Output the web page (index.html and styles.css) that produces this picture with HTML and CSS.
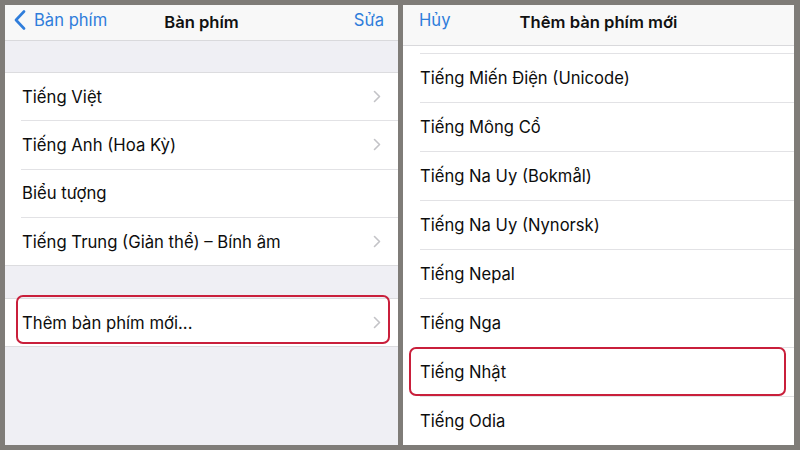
FILE: index.html
```html
<!DOCTYPE html>
<html lang="vi">
<head>
<meta charset="utf-8">
<link rel="stylesheet" href="styles.css">
</head>
<body>
<div class="frame">
  <section class="panel left">
    <header class="nav nav-left">
      <span class="back">
        <svg class="back-icon" width="12" height="20" viewBox="0 0 12 20"><polyline points="10,1.5 2,10 10,18.5" fill="none" stroke="#2f7ddb" stroke-width="2.6" stroke-linecap="round" stroke-linejoin="round"/></svg>
        <span>Bàn phím</span>
      </span>
      <span class="title">Bàn phím</span>
      <span class="action">Sửa</span>
    </header>
    <div class="spacer top"></div>
    <div class="group">
      <div class="row"><div class="row-inner"><span>Tiếng Việt</span><svg class="chev" width="8" height="13" viewBox="0 0 8 13"><polyline points="1.5,1.5 6.5,6.5 1.5,11.5" fill="none" stroke="#c3c3c7" stroke-width="1.6" stroke-linecap="round" stroke-linejoin="round"/></svg></div></div>
      <div class="row"><div class="row-inner"><span>Tiếng Anh (Hoa Kỳ)</span><svg class="chev" width="8" height="13" viewBox="0 0 8 13"><polyline points="1.5,1.5 6.5,6.5 1.5,11.5" fill="none" stroke="#c3c3c7" stroke-width="1.6" stroke-linecap="round" stroke-linejoin="round"/></svg></div></div>
      <div class="row"><div class="row-inner"><span>Biểu tượng</span></div></div>
      <div class="row last"><div class="row-inner"><span>Tiếng Trung (Giản thể) – Bính âm</span><svg class="chev" width="8" height="13" viewBox="0 0 8 13"><polyline points="1.5,1.5 6.5,6.5 1.5,11.5" fill="none" stroke="#c3c3c7" stroke-width="1.6" stroke-linecap="round" stroke-linejoin="round"/></svg></div></div>
    </div>
    <div class="spacer mid"></div>
    <div class="group">
      <div class="row last"><div class="row-inner"><span>Thêm bàn phím mới...</span><svg class="chev" width="8" height="13" viewBox="0 0 8 13"><polyline points="1.5,1.5 6.5,6.5 1.5,11.5" fill="none" stroke="#c3c3c7" stroke-width="1.6" stroke-linecap="round" stroke-linejoin="round"/></svg></div></div>
    </div>
    <div class="highlight hl-left"></div>
  </section>
  <section class="panel right">
    <header class="nav nav-right">
      <span class="action cancel">Hủy</span>
      <span class="title">Thêm bàn phím mới</span>
      <span class="action placeholder"></span>
    </header>
    <div class="list">
      <div class="item"><span>Tiếng Miến Điện (Unicode)</span></div>
      <div class="item"><span>Tiếng Mông Cổ</span></div>
      <div class="item"><span>Tiếng Na Uy (Bokmål)</span></div>
      <div class="item"><span>Tiếng Na Uy (Nynorsk)</span></div>
      <div class="item"><span>Tiếng Nepal</span></div>
      <div class="item"><span>Tiếng Nga</span></div>
      <div class="item"><span>Tiếng Nhật</span></div>
      <div class="item"><span>Tiếng Odia</span></div>
    </div>
    <div class="highlight hl-right"></div>
  </section>
</div>
</body>
</html>
```
FILE: styles.css
```css
* { box-sizing: border-box; }
html, body { margin: 0; padding: 0; }
body {
  width: 800px;
  height: 450px;
  overflow: hidden;
  background: #7f7c78;
  font-family: Inter, "Noto Sans", sans-serif;
  color: #111;
}
.frame {
  display: flex;
  gap: 5px;
  padding: 5px;
  height: 450px;
}
.panel {
  position: relative;
  height: 440px;
  overflow: hidden;
  display: flex;
  flex-direction: column;
}
.panel.left { width: 393px; background: #efeff4; }
.panel.right { width: 391px; background: #fff; }

.nav {
  display: flex;
  align-items: center;
  justify-content: space-between;
  background: #f8f8f8;
  border-bottom: 1px solid #d9d9dc;
  font-size: 16.6px;
  flex: none;
}
.nav-left { height: 36px; padding: 0 14px 6px 9px; }
.nav-right { height: 41px; padding: 0 14px 10px 16px; }
.title {
  font-weight: 600;
  position: absolute;
  left: 0;
  right: 0;
  text-align: center;
  pointer-events: none;
}
.nav-left .title { top: 7px; }
.nav-right .title { top: 7px; }
.back { display: flex; align-items: center; gap: 8px; color: #2f7ddb; }
.back-icon { display: block; }
.action { color: #2f7ddb; }
.placeholder { width: 20px; }

.spacer.top { height: 31px; flex: none; }
.spacer.mid { height: 32px; flex: none; }
.group {
  background: #fff;
  border-top: 1px solid #dcdcdf;
  border-bottom: 1px solid #dcdcdf;
  flex: none;
}
.row { padding-left: 16px; }
.row-inner {
  height: 48.3px;
  display: flex;
  align-items: center;
  justify-content: space-between;
  padding-left: 1px;
  padding-right: 17px;
  border-bottom: 1px solid #e2e2e5;
  font-size: 16.7px;
  color: #0d0d0d;
}
.row.last .row-inner { border-bottom: none; height: 47.3px; }
.chev { display: block; }

.list { padding-top: 7px; }
.item {
  margin-left: 17px;
  height: 49px;
  border-top: 1px solid #e2e2e5;
  display: flex;
  align-items: center;
  font-size: 16.6px;
  color: #0d0d0d;
}

.highlight {
  position: absolute;
  border: 2.5px solid #c91f3b;
  border-radius: 7px;
}
.hl-left { left: 11px; top: 290px; width: 374px; height: 48.5px; }
.hl-right { left: 6px; top: 342px; width: 377px; height: 49px; }
```
